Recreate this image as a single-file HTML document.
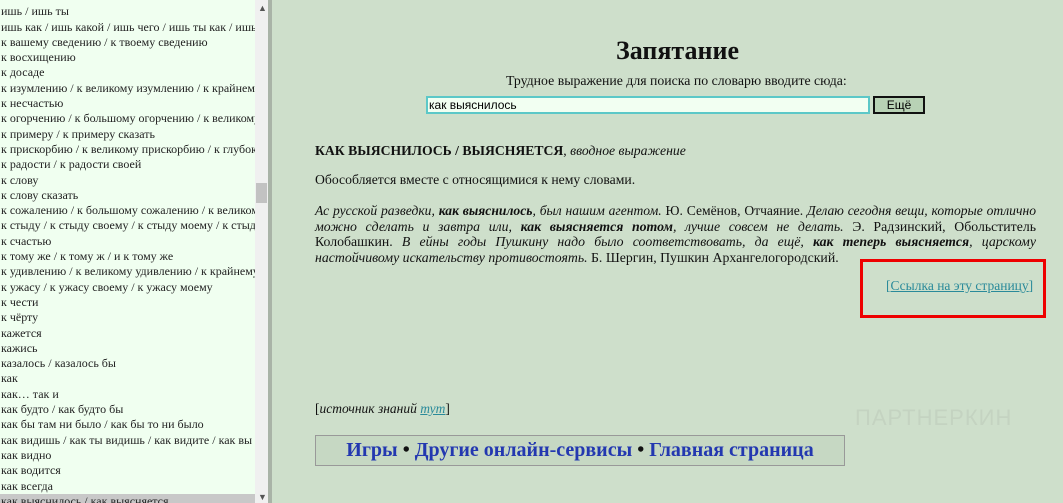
<!DOCTYPE html>
<html><head><meta charset="utf-8"><style>
*{margin:0;padding:0;box-sizing:border-box}
body{width:1063px;height:503px;overflow:hidden;background:#cedfcb;font-family:"Liberation Serif",serif;position:relative}
#left{position:absolute;left:0;top:0;width:255px;height:503px;background:#f0fff0;overflow:hidden}
#left div{height:15.3px;line-height:15.3px;font-size:12px;color:#222;white-space:nowrap;padding-left:1px}
#left .sel{background:#c8c8c8}
#sb{position:absolute;left:255px;top:0;width:13px;height:503px;background:#f0f0f0}
#thumb{position:absolute;left:256px;top:183px;width:11px;height:20px;background:#c2c2c2}
#div{position:absolute;left:268px;top:0;width:4px;height:503px;background:#a9b3a7}
.a{position:absolute;font-size:9px;color:#555;left:258px}
h1{position:absolute;left:560px;width:235px;top:36px;font-size:26px;text-align:center;color:#111}
.t{position:absolute;color:#111}
#inp{position:absolute;left:426px;top:96px;width:444px;height:18px;border:2px solid #5cc8c8;background:#f2fff2;font-family:"Liberation Sans",sans-serif;font-size:12px;line-height:14px;padding-left:1px}
#btn{position:absolute;left:873px;top:96px;width:52px;height:18px;border:2px solid #111;background:#b8d2b5;font-family:"Liberation Sans",sans-serif;font-size:12px;text-align:center;line-height:14px}
#ex{position:absolute;left:315px;top:203px;width:721px;font-size:13.8px;line-height:15.7px;color:#111}
#ex .j{text-align:justify;text-align-last:justify;white-space:nowrap;height:15.7px}
a{color:#2a8a9a;text-decoration:underline}
#red{position:absolute;left:860px;top:259px;width:186px;height:59px;border:3px solid #e00}
#nav{position:absolute;left:315px;top:435px;width:530px;height:31px;border:1px solid #999;background:#c6d8c3;text-align:center;font-weight:bold;font-size:20px;line-height:29px;color:#111}
#nav span{color:#2338b0}
</style></head><body>
<div id="left">
<div style="margin-top:-11px">ишь</div>
<div>ишь / ишь ты</div>
<div>ишь как / ишь какой / ишь чего / ишь ты как / ишь</div>
<div>к вашему сведению / к твоему сведению</div>
<div>к восхищению</div>
<div>к досаде</div>
<div>к изумлению / к великому изумлению / к крайнему</div>
<div>к несчастью</div>
<div>к огорчению / к большому огорчению / к великому</div>
<div>к примеру / к примеру сказать</div>
<div>к прискорбию / к великому прискорбию / к глубокому</div>
<div>к радости / к радости своей</div>
<div>к слову</div>
<div>к слову сказать</div>
<div>к сожалению / к большому сожалению / к великому</div>
<div>к стыду / к стыду своему / к стыду моему / к стыду</div>
<div>к счастью</div>
<div>к тому же / к тому ж / и к тому же</div>
<div>к удивлению / к великому удивлению / к крайнему</div>
<div>к ужасу / к ужасу своему / к ужасу моему</div>
<div>к чести</div>
<div>к чёрту</div>
<div>кажется</div>
<div>кажись</div>
<div>казалось / казалось бы</div>
<div>как</div>
<div>как… так и</div>
<div>как будто / как будто бы</div>
<div>как бы там ни было / как бы то ни было</div>
<div>как видишь / как ты видишь / как видите / как вы</div>
<div>как видно</div>
<div>как водится</div>
<div>как всегда</div>
<div class="sel">как выяснилось / как выясняется</div>
</div>
<div id="sb"></div><div id="thumb"></div><div id="div"></div>
<div class="a" style="top:3px">▲</div><div class="a" style="top:492px">▼</div>
<h1>Запятание</h1>
<div class="t" style="left:506px;top:73px;font-size:13.8px">Трудное выражение для поиска по словарю вводите сюда:</div>
<div id="inp">как выяснилось</div>
<div id="btn">Ещё</div>
<div class="t" style="left:315px;top:143px;font-size:13.7px"><b>КАК ВЫЯСНИЛОСЬ / ВЫЯСНЯЕТСЯ</b>, <i>вводное выражение</i></div>
<div class="t" style="left:315px;top:172px;font-size:13.7px">Обособляется вместе с относящимися к нему словами.</div>
<div id="ex">
<div class="j" style="font-size:13.6px"><i>Ас русской разведки, <b>как выяснилось</b>, был нашим агентом.</i> Ю. Семёнов, Отчаяние. <i>Делаю сегодня вещи, которые отлично</i></div>
<div class="j"><i>можно сделать и завтра или, <b>как выясняется потом</b>, лучше совсем не делать.</i> Э. Радзинский, Обольститель</div>
<div class="j">Колобашкин. <i>В ейны годы Пушкину надо было соответствовать, да ещё, <b>как теперь выясняется</b>, царскому</i></div>
<div><i>настойчивому искательству противостоять.</i> Б. Шергин, Пушкин Архангелогородский.</div>
</div>
<div class="t" style="left:886px;top:278px;font-size:13.5px;color:#2a8a9a">[<a>Ссылка на эту страницу</a>]</div>
<div id="red"></div>
<div class="t" style="left:315px;top:401px;font-size:13.5px">[<i>источник знаний <a>тут</a></i>]</div>
<div class="t" style="left:855px;top:405px;font-size:22px;color:#c4d3c1;font-family:'Liberation Sans',sans-serif;letter-spacing:1px">ПАРТНЕРКИН</div>
<div id="nav"><span>Игры</span> • <span>Другие онлайн-сервисы</span> • <span>Главная страница</span></div>
</body></html>
